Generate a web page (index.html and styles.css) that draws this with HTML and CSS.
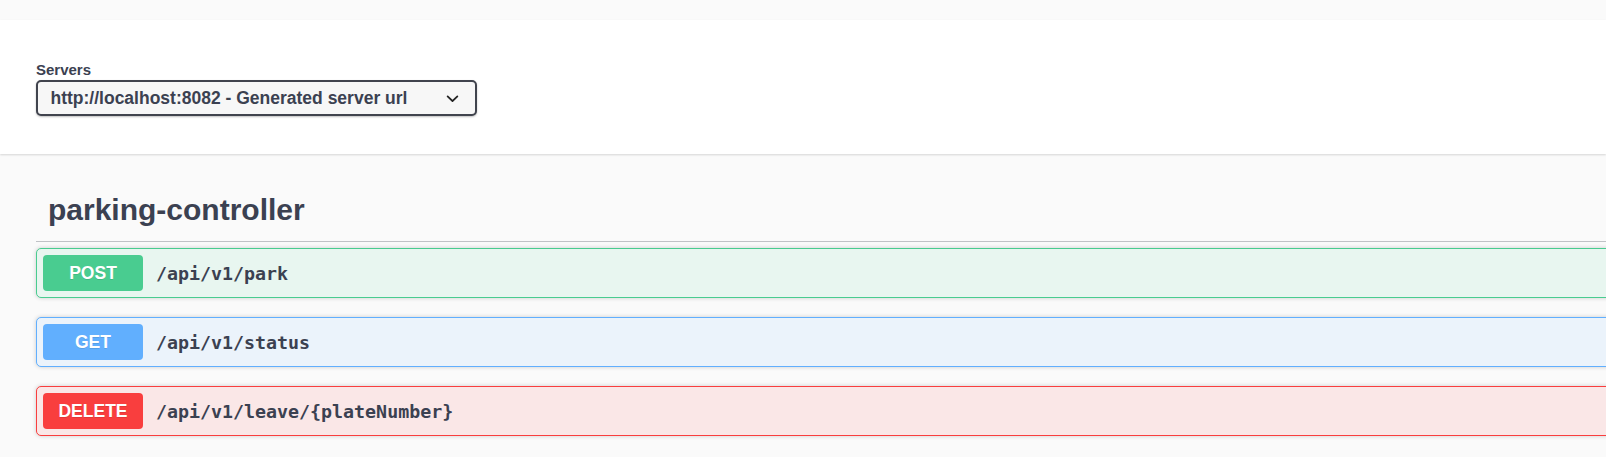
FILE: index.html
```html
<!DOCTYPE html>
<html lang="en">
<head>
<meta charset="utf-8">
<title>Swagger UI</title>
<link rel="stylesheet" href="styles.css">
</head>
<body>
<div class="topband"></div>
<section class="scheme-container">
  <div class="schemes">
    <label class="servers-label">Servers</label>
    <div class="server-select">
      <span class="server-text">http://localhost:8082 - Generated server url</span>
      <svg class="chevron" viewBox="0 0 20 20" width="25" height="25" aria-hidden="true"><path d="M13.418 7.859a.695.695 0 01.978 0 .68.68 0 010 .969l-3.908 3.83a.697.697 0 01-.979 0l-3.908-3.83a.68.68 0 010-.969.695.695 0 01.978 0L10 11l3.418-3.141z" fill="#222"/></svg>
    </div>
  </div>
</section>
<main class="wrapper">
  <h3 class="opblock-tag">parking-controller</h3>
  <div class="opblock post">
    <span class="method">POST</span>
    <span class="path">/api/v1/park</span>
  </div>
  <div class="opblock get">
    <span class="method">GET</span>
    <span class="path">/api/v1/status</span>
  </div>
  <div class="opblock delete">
    <span class="method">DELETE</span>
    <span class="path">/api/v1/leave/{plateNumber}</span>
  </div>
</main>
</body>
</html>
```

FILE: styles.css
```css
html, body {
  margin: 0;
  padding: 0;
  overflow: hidden;
}
body {
  background: #fafafa;
  font-family: "Liberation Sans", Arial, sans-serif;
  color: #3b4151;
}
.topband {
  height: 20px;
}
.scheme-container {
  background: #fff;
  box-shadow: 0 1px 2px 0 rgba(0, 0, 0, 0.15);
  padding: 41px 0 38px 36px;
}
.schemes {
  display: flex;
  flex-direction: column;
  align-items: flex-start;
}
.servers-label {
  font-size: 15px;
  font-weight: 700;
  line-height: 17px;
  margin-bottom: 2px;
  color: #3b4151;
}
.server-select {
  box-sizing: border-box;
  width: 441px;
  height: 36px;
  border: 2px solid #41444e;
  border-radius: 5px;
  background: #f7f7f7;
  box-shadow: 0 1px 2px 0 rgba(0, 0, 0, 0.25);
  display: flex;
  align-items: center;
  justify-content: space-between;
  padding: 0 10.5px 0 12.5px;
}
.server-text {
  font-size: 17.5px;
  font-weight: 700;
  color: #3b4151;
}
.chevron {
  display: block;
}
.wrapper {
  padding: 0 0 0 36px;
  margin-right: -300px;
}
.opblock-tag {
  margin: 27px 0 6px;
  padding: 12px 0 14px 12px;
  font-size: 30px;
  font-weight: 700;
  line-height: 34px;
  border-bottom: 1px solid rgba(59, 65, 81, 0.3);
  color: #3b4151;
}
.opblock {
  display: flex;
  align-items: center;
  border: 1px solid;
  border-radius: 5px;
  padding: 6px;
  margin-bottom: 19px;
  box-shadow: 0 0 4px rgba(0, 0, 0, 0.19);
}
.method {
  width: 100px;
  height: 36px;
  border-radius: 4px;
  display: flex;
  align-items: center;
  justify-content: center;
  font-size: 17.5px;
  font-weight: 700;
  color: #fff;
  text-shadow: 0 1px 0 rgba(0, 0, 0, 0.1);
}
.path {
  margin-left: 13px;
  font-family: "DejaVu Sans Mono", "Liberation Mono", monospace;
  font-size: 18.3px;
  font-weight: 700;
  color: #3b4151;
}
.post {
  background: #e8f6f0;
  border-color: #49cc90;
}
.post .method {
  background: #49cc90;
}
.get {
  background: #ebf3fb;
  border-color: #61affe;
}
.get .method {
  background: #61affe;
}
.delete {
  background: #fae7e7;
  border-color: #f93e3e;
}
.delete .method {
  background: #f93e3e;
}
```
